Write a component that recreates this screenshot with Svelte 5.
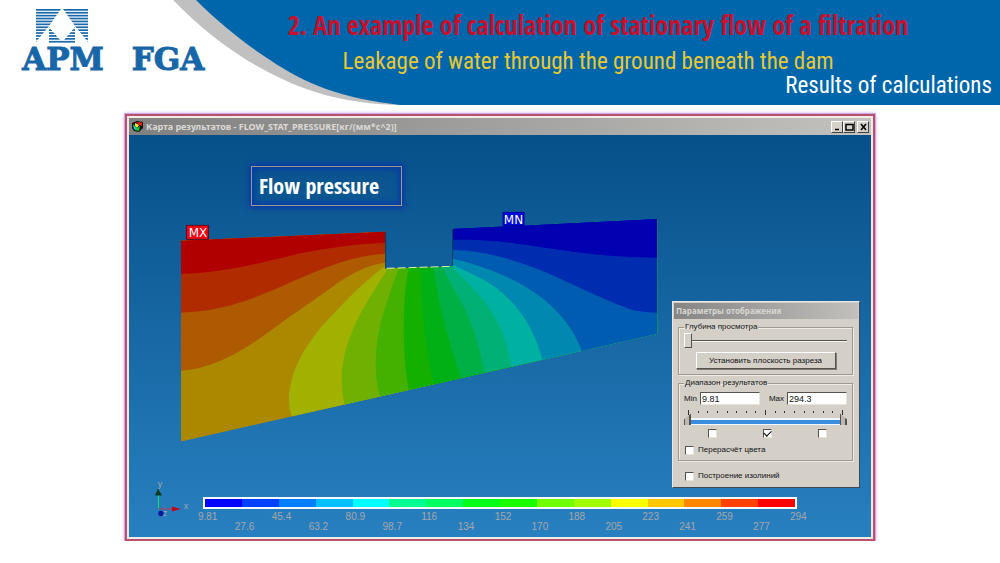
<script>
  const bands = [
    { color: '#b02c00', d: 'M170 313 L181 313 C196 312 208 311 220 308 C262 299 296 278 337 264 C354 258 370 255 386 254 L386 200 L170 200Z' },
    { color: '#b00000', d: 'M170 274 L181 274 C226 273 263 262 303 253 C330 248 358 244 386 243 L386 200 L170 200Z' },
    { color: '#a2b000', d: 'M386 266 C372 276 352 294 337 311 C322 325 308 344 301 357 C290 378 286 400 292 417 L292 460 L700 460 L700 200 L386 200Z' },
    { color: '#70b000', d: 'M388 269 C380 283 362 308 352 333 C342 357 339 381 345 405 L345 460 L700 460 L700 200 L386 200Z' },
    { color: '#44b000', d: 'M399 268 C394 285 386 302 380 328 C375 352 374 378 381 398 L381 460 L700 460 L700 200 L399 200Z' },
    { color: '#14b000', d: 'M409 268 C403 300 402 350 409 390 L409 460 L700 460 L700 200 L409 200Z' },
    { color: '#00b014', d: 'M421 268 C421 305 425 347 434 384 L434 460 L700 460 L700 200 L421 200Z' },
    { color: '#00b044', d: 'M434 267 C437 300 450 343 461 378 L461 460 L700 460 L700 200 L434 200Z' },
    { color: '#00b074', d: 'M443 267 C450 285 461 299 468 315 C476 333 481 353 485 373 L485 460 L700 460 L700 200 L443 200Z' },
    { color: '#00b0a0', d: 'M452 267 C463 278 480 294 493 313 C504 331 508 349 512 367 L512 460 L700 460 L700 200 L453 200Z' },
    { color: '#0088b0', d: 'M453 265 C462 270 473 274 484 280 C516 298 534 327 543 360 L543 460 L700 460 L700 200 L453 200Z' },
    { color: '#005cb0', d: 'M453 259 C467 262 479 266 493 271 C534 287 567 311 582 350 L582 460 L700 460 L700 200 L453 200Z' },
    { color: '#002cb0', d: 'M453 250 C486 251 514 260 540 270 C574 284 599 298 627 308 C637 312 647 313 670 313 L670 200 L453 200Z' },
    { color: '#0000b0', d: 'M453 240 C495 239 523 245 553 249 C591 255 624 258 670 258 L670 200 L453 200Z' }
  ];
  const scale = ['#0000ff', '#0040ff', '#0080ff', '#00c0ff', '#00ffff', '#00ff90', '#00ff60', '#00ff18', '#18ff00', '#70ff00', '#a0ff00', '#ffff00', '#ffc800', '#ff8800', '#ff4000', '#ff0000'];
  const ticks = ['9.81', '27.6', '45.4', '63.2', '80.9', '98.7', '116', '134', '152', '170', '188', '205', '223', '241', '259', '277', '294'];
  const stripes = [0, 1, 2, 3, 4, 5, 6, 7, 8, 9, 10, 11];
  const marks = Array.from({ length: 17 }, (_, i) => i);
</script>

<main>
  <header>
    <svg class="swoosh" viewBox="0 0 1000 106" preserveAspectRatio="none" aria-hidden="true">
      <path fill="#c0c0c0" d="M173 0 C202 30 236 56 270 73 C310 94 350 104 400 105 L400 0Z" />
      <path fill="#0066ab" d="M196 0 C218 22 245 44 270 60 C306 84 340 98 400 105 L1000 105 L1000 0Z" />
    </svg>
    <div class="logo">
      <svg width="54" height="34" viewBox="0 0 54 34" aria-hidden="true">
        <defs>
          <clipPath id="emblem">
            <path d="M1 0 H26 L14 17 L1 33Z M28 0 H53 V33 L40 17Z M14 18 L25 31 H29 L40 18 V34 H14Z" />
          </clipPath>
        </defs>
        <g clip-path="url(#emblem)">
          {#each stripes as i}
            <rect x="0" y={i * 2.9} width="54" height="1.7" fill="#1a68aa" />
          {/each}
        </g>
      </svg>
      <div class="brand"><span>APM</span><span>FGA</span></div>
    </div>
    <div class="titles">
      <h1>2. An example of calculation of stationary flow of a filtration</h1>
      <h2>Leakage of water through the ground beneath the dam</h2>
      <p>Results of calculations</p>
    </div>
  </header>

  <section class="window">
    <div class="bar">
      <svg width="11" height="11" viewBox="0 0 11 11" aria-hidden="true">
        <path fill="#111" d="M0 2 L5 0 L11 1 V7 L7 11 L2 10 L0 7Z" />
        <path fill="#e81c1c" d="M4 1 L10 1.5 V5 L7 4Z" />
        <path fill="#ffe82a" d="M3 2 L7 4 L5 7 L3 5Z" />
        <path fill="#19c832" d="M1 3 L3 5 L5 7 L8 5 L7 10 L3 9Z" />
        <path fill="#18c8e8" d="M1 4 L3 6 L4 9 L2 8Z" />
      </svg>
      <span class="caption">Карта результатов - FLOW_STAT_PRESSURE[кг/(мм*с^2)]</span>
      <div class="buttons">
        <button aria-label="Свернуть"><svg width="9" height="8" viewBox="0 0 9 8"><path d="M2 6.5 H6" /></svg></button>
        <button aria-label="Развернуть"><svg width="9" height="8" viewBox="0 0 9 8"><path d="M1 1.5 H8 V7 H1Z" /></svg></button>
        <button class="close" aria-label="Закрыть"><svg width="9" height="8" viewBox="0 0 9 8"><path d="M2 1 L7 7 M7 1 L2 7" /></svg></button>
      </div>
    </div>

    <div class="stage">
      <svg class="field" viewBox="129 135 743 403">
        <defs>
          <clipPath id="domain">
            <path d="M181 241 L386 232 V269 L453 267 V229 L658 219 V334 L181 442Z" />
          </clipPath>
        </defs>
        <g clip-path="url(#domain)">
          <rect x="170" y="210" width="500" height="240" fill="#ac8800" />
          <path fill="#ae5a00" d="M170 371 L181 371 C194 370 201 368 210 365 C248 352 278 324 303 308 C332 289 354 267 386 263 L386 200 L170 200Z" />
          {#each bands as b}
            <path fill={b.color} d={b.d} />
          {/each}
        </g>
        <path d="M386 232 V269 M453 229 V266" stroke="#073c58" fill="none" />
        <path d="M387 268.500 L453 266.500" stroke="#d8f0a0" stroke-dasharray="8 3" fill="none" />
        <rect x="186.500" y="225.500" width="22" height="14" fill="#f00010" stroke="#5c1018" />
        <text class="pin" x="198" y="237">MX</text>
        <rect x="503.500" y="212.500" width="21" height="13" fill="#0008e0" stroke="#0000a0" />
        <text class="pin" x="514" y="224">MN</text>
        <g>
          <path d="M158.500 509 V495" stroke="#18e060" />
          <path d="M155 496 L158 489 L162 496Z" fill="#063c20" />
          <path d="M159 509.500 H173" stroke="#d03048" />
          <path d="M172 507 L181 509.500 L172 512Z" fill="#c00818" />
          <circle cx="161" cy="514" r="2.700" fill="#0018a0" />
          <text class="axis" x="160" y="487">y</text>
          <text class="axis" x="186" y="510">x</text>
          <text class="axis" x="165" y="517">z</text>
        </g>
      </svg>

      <div class="tag">Flow pressure</div>

      <div class="legend">
        <div class="colors">
          {#each scale as c}<i style:background={c}></i>{/each}
        </div>
        <ol>
          {#each ticks as t}<li>{t}</li>{/each}
        </ol>
      </div>

      <form class="dialog">
        <div class="dialog-title">Параметры отображения</div>
        <div class="dialog-body">
          <fieldset class="depth">
            <legend>Глубина просмотра</legend>
            <input type="range" min="0" max="100" value="0" aria-label="Глубина просмотра" />
            <button type="button">Установить плоскость разреза</button>
          </fieldset>
          <fieldset>
            <legend>Диапазон результатов</legend>
            <div class="limits">
              <label for="min">Min</label><input id="min" type="text" value="9.81" />
              <label class="second" for="max">Max</label><input id="max" type="text" value="294.3" />
            </div>
            <div class="ticks">
              {#each marks as m}<i class:long={m % 8 === 0}></i>{/each}
            </div>
            <div class="dual">
              <input class="low" type="range" min="0" max="100" value="0" aria-label="Min" />
              <input class="high" type="range" min="0" max="100" value="100" aria-label="Max" />
            </div>
            <div class="trio">
              <input type="checkbox" aria-label="Min" />
              <input type="checkbox" aria-label="Min - Max" checked />
              <input type="checkbox" aria-label="Max" />
            </div>
            <label class="check"><input type="checkbox" />Перерасчёт цвета</label>
          </fieldset>
          <label class="check last"><input type="checkbox" />Построение изолиний</label>
        </div>
      </form>
    </div>
  </section>
</main>

<style>
  :global(body) { margin: 0; background: #fff; }
  * { box-sizing: border-box; }
  main { font-family: "Liberation Sans", Arial, sans-serif; }
  header { position: relative; display: flex; height: 106px; }
  .swoosh { position: absolute; inset: 0; width: 100%; height: 100%; }
  .logo { position: relative; width: 192px; margin-left: 18px; padding-top: 9px; display: flex; flex-direction: column; align-items: center; flex: none; }
  .logo > svg { margin-right: 104px; }
  .brand { display: grid; grid-template-columns: 90px 84px; justify-content: space-between; justify-items: center; width: 100%; font: bold 31px/32px "DejaVu Serif", serif; color: #1766a8; -webkit-text-stroke: 1px #1766a8; }
  .titles { position: relative; flex: 1; padding: 2px 8px 0 0; text-align: center; font-family: "Roboto Condensed", "Arial Narrow", "Liberation Sans", sans-serif; white-space: nowrap; }
  h1 { margin: 0 6px 0 0; font-family: "Open Sans Condensed", "Roboto Condensed", sans-serif; font-size: 26px; line-height: 46px; color: #c8102c; }
  h2 { margin: 0 26px 0 0; font-size: 23px; font-weight: normal; line-height: 28px; color: #e8c832; }
  p { margin: 0; font-size: 23px; line-height: 20px; color: #fff; text-align: right; }

  .window { width: 75%; margin: 8px auto 0; border: 2px solid #b8506e; outline: 1px solid #d0a8e8; box-shadow: 0 0 4px #b080d8; background: #f0ece8; padding: 2px; }
  .bar { display: flex; align-items: center; gap: 3px; height: 17px; padding: 0 2px 0 3px; background: linear-gradient(90deg, #808080, #c4c2be); }
  .caption { flex: 1; font: bold 9px/16px "Noto Sans", sans-serif; color: #dcdad6; white-space: nowrap; }
  .buttons { display: flex; }
  .buttons button { width: 12px; height: 12px; padding: 0; display: grid; place-items: center; background: #d6d2ca; border: 1px solid; border-color: #fff #404040 #404040 #fff; }
  .buttons .close { margin-left: 2px; }
  .buttons path { stroke: #000; stroke-width: 1.5; fill: none; }

  .stage { position: relative; background: linear-gradient(#075089, #2880c0); }
  .field { display: block; width: 100%; height: auto; }
  .pin { font: 12px "DejaVu Sans", sans-serif; fill: #fff; text-anchor: middle; }
  .axis { font: 9px "Liberation Sans", sans-serif; fill: #a0a8b0; text-anchor: middle; }
  .tag { position: absolute; left: 122px; top: 31px; width: 151px; height: 40px; padding-left: 7px; border: 1px solid #a0988c; box-shadow: 0 0 5px 2px #0838a8, inset 0 0 6px 2px #0838a8; color: #fff; font: bold 22px/36px "Open Sans Condensed", "Roboto Condensed", sans-serif; white-space: nowrap; }

  .legend { position: absolute; left: 10%; right: 10%; bottom: 3px; }
  .colors { display: flex; height: 12px; border: 2px solid #f4f8fc; }
  .colors i { flex: 1; }
  ol { display: grid; grid-template-columns: repeat(17, minmax(0, 1fr)); list-style: none; margin: 0 -20px 0 -14px; padding: 1px 0 0; font-size: 10px; line-height: 14px; color: #a8a6a8; }
  li { display: flex; justify-content: center; padding-bottom: 10px; }
  li:nth-child(even) { padding: 10px 0 0; }

  .dialog { position: absolute; right: 11px; bottom: 49px; width: 188px; background: #d4d0c8; border: 1px solid; border-color: #ece8e0 #404850 #404850 #ece8e0; font-size: 8px; line-height: 10px; color: #111; }
  .dialog-title { margin: 1px; padding: 0 2px; height: 16px; font: bold 8px/16px "Noto Sans", sans-serif; color: #d8d6d2; background: linear-gradient(90deg, #858585, #c2c0bc); }
  .dialog-body { padding: 2px 6px 6px 5px; }
  fieldset { margin: 0 0 3px; padding: 0 5px 5px; border: 1px solid #9c9890; box-shadow: inset 1px 1px #f0ece4, 1px 1px #f0ece4; min-width: 0; }
  legend { padding: 0 1px; }
  .depth { display: flex; flex-direction: column; }
  .depth button { align-self: center; margin-top: 2px; height: 17px; width: 140px; padding: 0; font: 8px "Liberation Sans", sans-serif; color: #111; background: #d4d0c8; border: 1px solid; border-color: #fff #55524c #55524c #fff; box-shadow: 1px 1px #807c74; white-space: nowrap; }

  input[type='range'] { appearance: none; display: block; width: 100%; height: 18px; margin: 0; background: transparent; }
  input[type='range']::-webkit-slider-runnable-track { height: 2px; background: #55524c; border-bottom: 1px solid #f8f6f0; }
  input[type='range']::-webkit-slider-thumb { appearance: none; width: 8px; height: 15px; margin-top: -7px; background: #d4d0c8; border: 1px solid; border-color: #fff #55524c #55524c #fff; }

  .limits { display: flex; align-items: center; gap: 3px; margin-top: 4px; }
  .limits input { flex: 1; min-width: 0; height: 13px; padding: 0 1px; font: 9px "Liberation Sans", sans-serif; color: #111; background: #fff; border: 1px solid; border-color: #55524c #e8e4dc #e8e4dc #55524c; }
  .second { margin-left: 6px; }
  .ticks { display: flex; justify-content: space-between; height: 8px; margin-top: 5px; padding: 0 4px; }
  .ticks i { width: 1px; height: 2px; margin-top: 1px; background: #33302c; }
  .ticks .long { height: 5px; margin-top: 0; }
  .dual { display: grid; height: 10px; background: linear-gradient(#f4f8fc 0 2px, #3c8ce0 2px 6px, #f4f8fc 6px 7px, transparent 7px) 3px 0 / calc(100% - 6px) 100% no-repeat; }
  .dual input[type='range'] { grid-area: 1 / 1; height: 10px; pointer-events: none; }
  .dual input::-webkit-slider-runnable-track { height: 10px; background: transparent; border: 0; }
  .dual input[type='range']::-webkit-slider-thumb { width: 7px; height: 12px; margin-top: -5px; pointer-events: auto; border: 0; background: linear-gradient(90deg, #55524c 1px, #bcb8b0 1px 5px, #55524c 5px); }
  .dual .low::-webkit-slider-thumb { clip-path: polygon(100% 0, 100% 100%, 0 100%, 0 50%); }
  .dual .high::-webkit-slider-thumb { clip-path: polygon(0 0, 100% 50%, 100% 100%, 0 100%); }
  .trio { display: flex; justify-content: space-between; margin: 1px 20px 7px 24px; }
  input[type='checkbox'] { appearance: none; width: 9px; height: 9px; margin: 0; background: #fff; border: 1px solid; border-color: #55524c #e8e4dc #e8e4dc #55524c; display: grid; place-items: center; flex: none; }
  input[type='checkbox']:checked::after { content: ''; width: 6px; height: 4px; margin-top: -2px; border: solid #000; border-width: 0 0 1px 1px; transform: rotate(-45deg); }
  .check { display: flex; align-items: center; gap: 4px; padding-left: 1px; }
  .last { margin-top: 10px; padding-left: 7px; }
</style>
